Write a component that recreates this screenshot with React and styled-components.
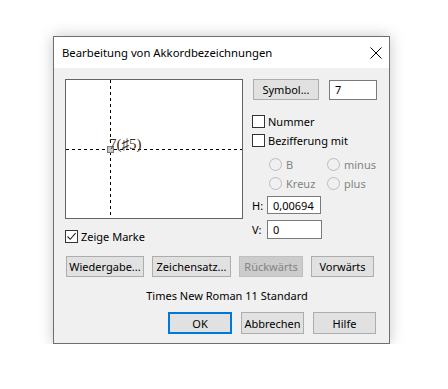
import React from "react";
import styled, { createGlobalStyle } from "styled-components";

const GlobalStyle = createGlobalStyle`
  body {
    margin: 0;
    background: #ffffff;
    font-family: "Noto Sans", "Open Sans", sans-serif;
  }
`;

const Page = styled.div`
  padding: 36px 0 0 53px;
`;

const Dialog = styled.div`
  width: 337px;
  height: 308px;
  box-sizing: border-box;
  border: 1px solid #6f6f6f;
  background: #f0f0f0;
  box-shadow: 0 0 14px rgba(0, 0, 0, 0.22);
  display: flex;
  flex-direction: column;
  font-size: 11px;
  color: #000;
`;

const TitleBar = styled.div`
  height: 31px;
  background: #ffffff;
  display: flex;
  align-items: center;
  justify-content: space-between;
  padding: 0 7px 0 8px;
  font-size: 11.3px;
`;

const Body = styled.div`
  padding: 11px 13px 0 11px;
  display: flex;
  flex-direction: column;
`;

const Main = styled.div`
  display: grid;
  grid-template-columns: 178px 1fr;
  column-gap: 9px;
`;

const LeftCol = styled.div`
  display: flex;
  flex-direction: column;
`;

const Canvas = styled.div`
  width: 178px;
  height: 140px;
  box-sizing: border-box;
  border: 1px solid #646464;
  background: #ffffff;
  position: relative;
`;

const RightCol = styled.div`
  display: flex;
  flex-direction: column;
`;

const Row = styled.div`
  display: flex;
  align-items: center;
  gap: ${(p) => p.$gap || 0}px;
  margin-top: ${(p) => p.$mt || 0}px;
  margin-left: ${(p) => p.$ml || 0}px;
`;

const Button = styled.button`
  height: ${(p) => p.$h || 21}px;
  width: ${(p) => p.$w}px;
  box-sizing: border-box;
  background: ${(p) => (p.disabled ? "#cccccc" : "#e1e1e1")};
  border: ${(p) => (p.$default ? "2px solid #0078d7" : p.disabled ? "1px solid #bfbfbf" : "1px solid #adadad")};
  color: ${(p) => (p.disabled ? "#838383" : "#000")};
  font-family: inherit;
  font-size: 11px;
  padding: 0;
  margin: 0;
`;

const Input = styled.div`
  width: ${(p) => p.$w}px;
  height: ${(p) => p.$h || 19}px;
  box-sizing: border-box;
  border: 1px solid #7a7a7a;
  background: #ffffff;
  display: flex;
  align-items: center;
  padding-left: 5px;
  font-size: 11px;
`;

const CheckRow = styled.label`
  display: flex;
  align-items: center;
  gap: 3px;
  margin-top: ${(p) => p.$mt || 0}px;
  line-height: 13px;
`;

const Box = styled.span`
  width: 13px;
  height: 13px;
  box-sizing: border-box;
  border: 1px solid #333333;
  background: #ffffff;
  display: flex;
  align-items: center;
  justify-content: center;
`;

const RadioGrid = styled.div`
  display: grid;
  grid-template-columns: 58px 1fr;
  row-gap: 6px;
  margin: 11px 0 0 17px;
`;

const RadioItem = styled.div`
  display: flex;
  align-items: center;
  gap: 4px;
  color: #838383;
  line-height: 13px;
`;

const Radio = styled.span`
  width: 13px;
  height: 13px;
  box-sizing: border-box;
  border: 1px solid #bcbcbc;
  border-radius: 50%;
  background: #f0f0f0;
`;

const FieldLabel = styled.span`
  width: 15px;
`;

const ButtonRow = styled.div`
  display: flex;
  justify-content: ${(p) => p.$justify || "flex-start"};
  gap: ${(p) => p.$gap || 8}px;
  margin-top: ${(p) => p.$mt || 0}px;
  padding-left: 1px;
`;

const Status = styled.div`
  text-align: center;
  margin-top: 11px;
  margin-left: 13px;
  line-height: 15px;
`;

const Crosshair = () => (
  <svg width="176" height="138" style={{ display: "block" }}>
    <line x1="44.5" y1="0" x2="44.5" y2="138" stroke="#000" strokeDasharray="3 3" />
    <line x1="0" y1="69.5" x2="176" y2="69.5" stroke="#000" strokeDasharray="3 3" />
    <rect x="41.5" y="66.5" width="6" height="6" fill="#c8c8c8" stroke="#777" />
    <text x="43" y="69" fontFamily="Liberation Serif, serif" fontSize="15" fill="#3b2a14">
      7(♯5)
    </text>
  </svg>
);

const Check = () => (
  <svg width="11" height="11" viewBox="0 0 11 11">
    <path d="M1.5 5.5 L4.2 8.3 L9.6 2.2" fill="none" stroke="#222" strokeWidth="1.1" />
  </svg>
);

const CloseIcon = () => (
  <svg width="12" height="12" viewBox="0 0 12 12">
    <path d="M0.5 0.5 L11.5 11.5 M11.5 0.5 L0.5 11.5" stroke="#000" strokeWidth="1" />
  </svg>
);

const App = () => {
  return (
    <>
      <GlobalStyle />
      <Page>
        <Dialog>
          <TitleBar>
            <span>Bearbeitung von Akkordbezeichnungen</span>
            <CloseIcon />
          </TitleBar>
          <Body>
            <Main>
              <LeftCol>
                <Canvas>
                  <Crosshair />
                </Canvas>
                <CheckRow $mt={11}>
                  <Box>
                    <Check />
                  </Box>
                  Zeige Marke
                </CheckRow>
              </LeftCol>
              <RightCol>
                <Row $gap={10} $ml={1}>
                  <Button $w={66}>Symbol...</Button>
                  <Input $w={48} $h={20}>7</Input>
                </Row>
                <CheckRow $mt={15}>
                  <Box />
                  Nummer
                </CheckRow>
                <CheckRow $mt={6}>
                  <Box />
                  Bezifferung mit
                </CheckRow>
                <RadioGrid>
                  <RadioItem>
                    <Radio />B
                  </RadioItem>
                  <RadioItem>
                    <Radio />minus
                  </RadioItem>
                  <RadioItem>
                    <Radio />Kreuz
                  </RadioItem>
                  <RadioItem>
                    <Radio />plus
                  </RadioItem>
                </RadioGrid>
                <Row $mt={6}>
                  <FieldLabel>H:</FieldLabel>
                  <Input $w={54} $h={18}>0,00694</Input>
                </Row>
                <Row $mt={6}>
                  <FieldLabel>V:</FieldLabel>
                  <Input $w={55}>0</Input>
                </Row>
              </RightCol>
            </Main>
            <ButtonRow $mt={13}>
              <Button $w={78}>Wiedergabe...</Button>
              <Button $w={79}>Zeichensatz...</Button>
              <Button $w={64} disabled>
                Rückwärts
              </Button>
              <Button $w={63}>Vorwärts</Button>
            </ButtonRow>
            <Status>Times New Roman 11 Standard</Status>
            <ButtonRow $justify="flex-end" $gap={9} $mt={9}>
              <Button $w={64} $h={22} $default>
                OK
              </Button>
              <Button $w={63} $h={22}>
                Abbrechen
              </Button>
              <Button $w={63} $h={22}>
                Hilfe
              </Button>
            </ButtonRow>
          </Body>
        </Dialog>
      </Page>
    </>
  );
};

export default App;
